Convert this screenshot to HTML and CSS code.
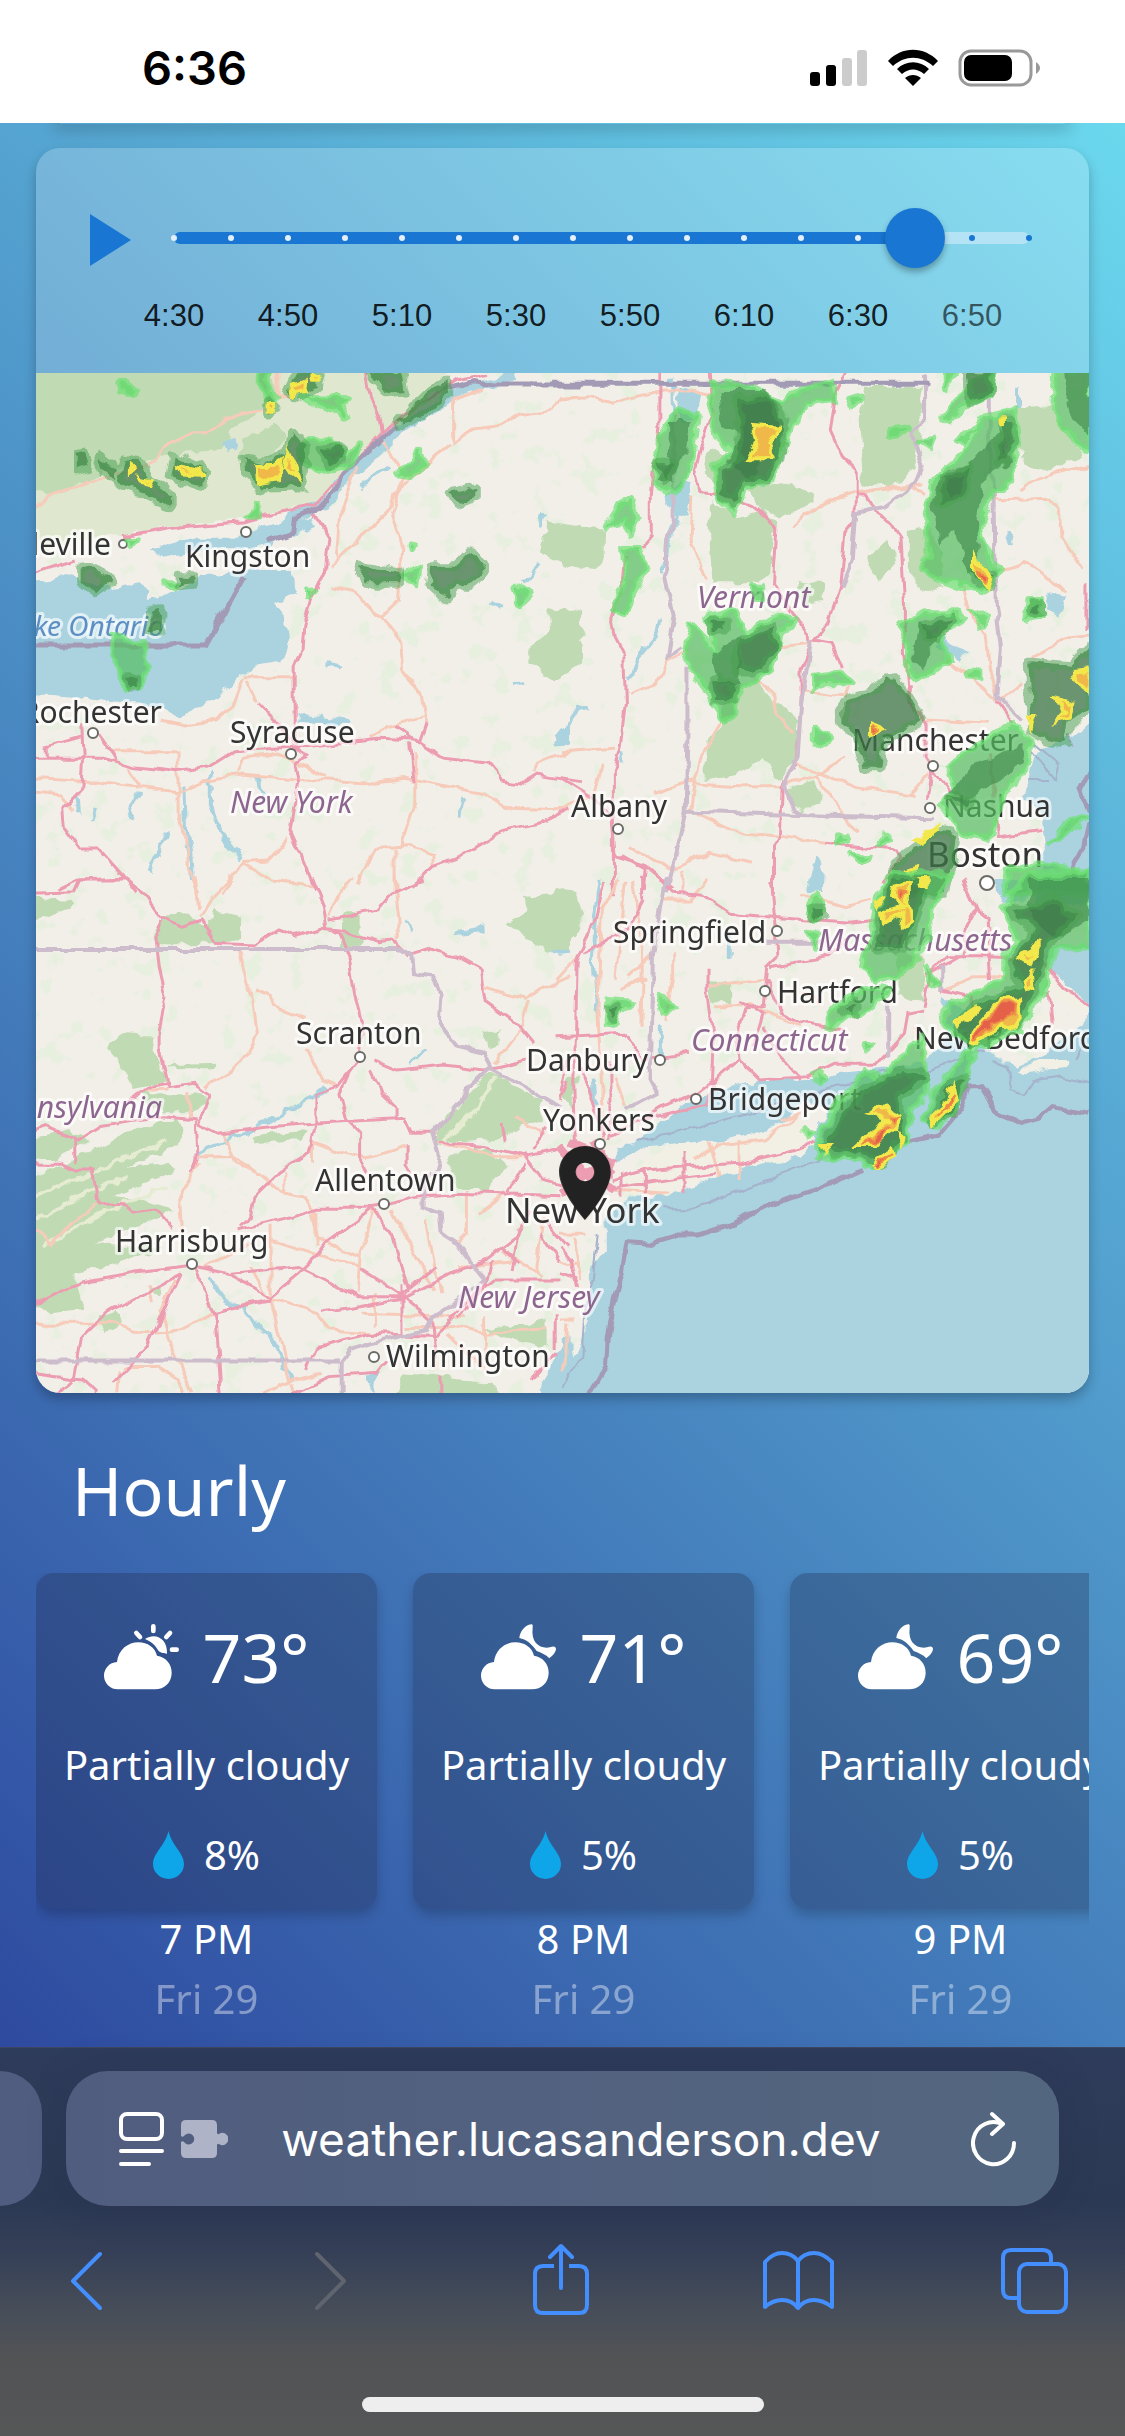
FILE: index.html
```html
<!DOCTYPE html>
<html lang="en">
<head>
<meta charset="utf-8">
<meta name="viewport" content="width=device-width, initial-scale=1">
<title>Weather</title>
<link rel="stylesheet" href="styles.css">
</head>
<body>
<header class="status">
  <time class="clock">6:36</time>
  <div class="status-icons">
    <svg width="58" height="38" viewBox="0 0 58 38" aria-hidden="true"><rect y="23" width="10" height="14" rx="3"/><rect x="16" y="16" width="10" height="21" rx="3"/><g fill="#ccc"><rect x="32" y="9" width="10" height="28" rx="3"/><rect x="47" y="1" width="10" height="36" rx="3"/></g></svg>
    <svg width="52" height="38" viewBox="0 0 52 38" aria-hidden="true"><path d="M1 12C15-3 37-3 51 12L46 17C34 6 18 6 6 17ZM10 20C19 11 33 11 42 20L37 25C30 19 22 19 15 25ZM18 29C23 25 29 25 34 29L26 37Z"/></svg>
    <svg width="84" height="38" viewBox="0 0 84 38" aria-hidden="true"><rect x="2" y="2" width="71" height="34" rx="11" fill="none" stroke="#999" stroke-width="3"/><rect x="6" y="6" width="48" height="26" rx="7"/><path fill="#999" d="M78 13Q86 19 78 25Z"/></svg>
  </div>
</header>

<main class="page">
  <div class="previous-card"></div>
  <section class="radar" aria-label="Radar">
    <div class="player">
      <button class="play" aria-label="Play"><svg width="41" height="52" viewBox="0 0 41 52"><path d="M0 0L41 26L0 52Z"/></svg></button>
      <div class="timeline">
        <div class="slider">
          <div class="track"></div>
          <div class="ticks"><i></i><i></i><i></i><i></i><i></i><i></i><i></i><i></i><i></i><i></i><i></i><i></i><i></i><i></i><i class="future"></i><i class="future"></i></div>
          <input type="range" min="0" max="15" value="13" aria-label="Radar time">
        </div>
        <div class="times"><span>4:30</span><span>4:50</span><span>5:10</span><span>5:30</span><span>5:50</span><span>6:10</span><span>6:30</span><span class="future">6:50</span></div>
      </div>
    </div>
    <svg class="map" viewBox="36 373 1053 1020" role="img" aria-label="Precipitation map around New York">
      <defs>
        <filter id="rough" x="0" y="0" width="100%" height="100%"><feTurbulence type="fractalNoise" baseFrequency=".07" numOctaves="2" seed="4"/><feDisplacementMap in="SourceGraphic" scale="12" xChannelSelector="R" yChannelSelector="G"/></filter>
        <filter id="wiggle" x="0" y="0" width="100%" height="100%"><feTurbulence type="fractalNoise" baseFrequency=".05" numOctaves="2" seed="9"/><feDisplacementMap in="SourceGraphic" scale="9" xChannelSelector="R" yChannelSelector="G"/></filter>
        <filter id="speckle" x="0" y="0" width="100%" height="100%"><feTurbulence type="fractalNoise" baseFrequency=".045" numOctaves="4" seed="12"/><feColorMatrix values="0 0 0 0 .75  0 0 0 0 .86  0 0 0 0 .69  9 0 0 0 -5.4"/></filter>
      </defs>
      <rect x="36" y="373" width="1053" height="1020" fill="#f2efe9"/>
      <rect x="36" y="373" width="1053" height="1020" filter="url(#speckle)" opacity=".6"/>

      <!-- woods and water -->
      <g filter="url(#rough)">
        <g transform="translate(30 370) scale(.3444 .3333)">
          <path class="wood pale" d="M-60-60H1260L1150 90 1040 190 920 300 840 400 620 450 420 470 200 500-60 560Z"/>
          <path class="wood" d="M-60-60H690L720 90 590 170 560 240 420 250 260 290 100 360-60 380ZM620 200L720 160 740 210 700 260 610 290ZM1600 460L1520 480 1490 500 1480 550 1560 590 1620 590ZM1600 710L1540 730 1500 790 1450 830 1450 880 1520 930 1600 880Z"/>
          <path class="water" d="M-40 640L60 630 100 612 150 630 240 655 320 640 350 660 340 690 400 680 500 620 640 600 760 600 770 670 710 700 740 740 750 820 735 880 650 895 590 935 550 985 480 1010 440 1045 380 1010 280 1000 180 985 60 975-40 970ZM350 540L480 500 600 500 700 460 820 440 830 470 740 500 640 530 500 540 380 560ZM780 1030L930 1050 925 1065 780 1055ZM1520 1100L1568 1060V1120L1530 1130ZM560 210L590 200 600 240 575 250Z"/>
          <path class="river wide" d="M1410 20L1250 60 1060 190 900 340 860 400 760 440 740 490 680 520"/>
          <path class="river" d="M445 1250L450 1370 465 1440 470 1530M525 1200L525 1310 560 1400 615 1470M395 1380L375 1440 345 1510M315 1260L285 1350M655 1220L680 1280M140 1270L145 1330M180 1310L185 1360M1480 570L1430 640M1340 690L1370 720M1400 940L1440 930M1255 1290L1250 1340M1040 290L960 350M860 880L900 890M1490 430L1480 470"/>
        </g>
        <g transform="translate(560 370) scale(.3444 .3333)">
          <path class="wood" d="M-40 450L130 480V560L110 600 50 595 0 570ZM-40 710L50 730 75 800 0 880ZM440 390L520 440 590 420 625 460 610 610 560 640 440 640 430 500ZM880 50H1050V180L1030 290 1000 340 880 350 870 150ZM540 350L650 340 730 370 740 400 640 440 580 420ZM480 950L580 930 620 1000 680 1020 690 1150 640 1230 590 1160 500 1220 420 1230 420 1130 470 1060ZM1010 480L1070 470 1110 550 1110 650 1050 670 1010 600ZM890 560L950 510 980 570 920 640ZM1320 120L1430 110 1520 250 1420 310 1340 270ZM650 1260L740 1230 760 1300 700 1330ZM430 230L480 250 450 340 420 310ZM690 630L760 640 770 690 700 700Z"/>
          <path class="water" d="M340 60L410 70 400 130 350 160ZM340 330L385 340 370 440 330 440 310 380ZM1100 800L1190 850 1160 870 1090 830ZM1420 670L1470 680 1450 740 1410 710ZM1600 1010L1490 1100 1400 1130 1370 1180 1350 1290 1400 1330 1410 1420 1390 1470 1380 1600H1600ZM745 1460L765 1480 760 1560 720 1560Z"/>
          <path class="river" d="M325 20L330 180M340 430L310 520 300 610M285 750L275 800 220 870 200 930M90 1015L50 1020 0 1100M1330 50L1330 120M1300 480L1310 530M180 1150L175 1180"/>
        </g>
        <g transform="translate(30 880) scale(.3444 .3333)">
          <path class="wood" d="M220 500L260 460 350 470 380 560 400 610 300 630 270 560ZM1440 50L1568 30V210L1510 220 1440 170 1380 130 1450 90ZM-20 50L120 60 130 80 20 120ZM370 130L430 90 510 130 540 90 610 110 610 180 540 190 360 190ZM910 100H960V200H900ZM1330 580L1490 660 1480 720 1350 780 1190 790 1180 750ZM1210 830L1320 800 1390 860 1330 930 1240 930ZM-20 910L100 850 300 750 430 710 440 750 420 800 280 860 400 850 430 870 240 950 330 960 420 990 190 1090 390 1100 230 1160 120 1180 160 1290 60 1300-20 1250ZM-20 780L110 750 180 780 80 840-20 840ZM320 640L460 640 520 650 470 700 380 700ZM400 550L540 545 540 565 420 565ZM200 1310L250 1290 270 1330 220 1370ZM640 770L800 750 790 780 650 790ZM1310 1350L1500 1320 1500 1400 1420 1380ZM1320 460L1370 450 1360 500 1330 510ZM1090 1480L1300 1500 1400 1550H1060ZM340 1220H390L380 1250Z"/>
          <path class="ridge" d="M-20 960L180 880 400 780M-20 1040L120 960 280 890M40 1100L200 1000 400 920M1200 790L1300 680 1350 600"/>
          <path class="water" d="M1568 1360L1520 1430 1480 1530 1500 1600H1600ZM975 1480L1010 1480 1000 1540 985 1520Z"/>
          <path class="river" d="M520 1190L560 1260 620 1280 660 1340 720 1400 740 1460 760 1500M1150 510L1100 550M1090 130L1110 160M480 820L600 770 700 720 860 630M1520 220L1568 215M1230 160L1320 145"/>
        </g>
        <g transform="translate(560 880) scale(.3444 .3333)">
          <path class="wood" d="M-20 20L50 30 70 100 40 170-20 160ZM20 590L50 590 30 680 10 650ZM430 300L500 310 500 370 440 370ZM980 220L1050 230 1060 370 980 350Z"/>
          <path class="water" d="M160 810L240 770 350 690 440 640 540 610 720 600 800 580 900 570 980 560 1060 540 1120 480 1130 400 1100 350 1200 400 1220 480 1250 520 1330 560 1400 530 1440 490 1520 440 1540 380 1450 300 1410 240 1430 200 1600 190V1600H-20L30 1450 80 1330 90 1180 130 1100 130 1030 180 960 320 940 440 900 560 860 700 830 740 760 780 690 720 660 620 740 480 780 340 790 240 800 170 840ZM1250 0H1360L1350 60 1290 70Z"/>
          <path class="river" d="M115 0L100 130 95 250 110 400M290 430V540M490 160V240M95 590L100 680"/>
          <path class="land" d="M200 880L260 830 350 790 480 790 620 750 720 690 740 690 700 740 740 790 700 820 520 870 320 930 180 950ZM1330 570L1400 540 1480 540 1470 560 1350 580Z"/>
          <path class="land" d="M1380 400L1450 410 1440 450 1370 460ZM1410 240L1440 300 1520 370 1568 380V400L1500 380 1420 350Z"/>
        </g>
      </g>

      <!-- roads and borders -->
      <g filter="url(#wiggle)">
        <g transform="translate(30 370) scale(.3444 .3333)">
          <path class="trunk" d="M0 420L70 370 210 325 340 290 400 230 470 185 520 185 570 145 690 115M720-20V80L760 90M1230 90V220L1290 180 1360 170 1420 135 1510 120 1540 90 1600 85M1230 90L1320 55M1220 225L1140 290 1060 370 1035 430 960 500 870 590M1025 210L1085 320 1050 430 1080 520 1070 690 1020 740 940 665 870 650M950 290L900 420 890 560M1020 740L1080 820 1085 910 1135 970 1150 1060M630 930L660 1000M620 920H690L770 920M620 925L590 1010 540 1050 450 1065 380 1050M0 1225L180 1235 300 1250 430 1265 500 1235 620 1215 770 1230 870 1230 980 1240 1090 1225 1200 1250 1320 1275 1400 1315 1568 1320M240 1145H430V1340L455 1400 460 1500 490 1570M280 1190L320 1250M0 1265L90 1275 120 1320M605 1210L620 1165 720 1150 860 1220M990 1100L1040 1070 1140 1040M1120 1150V1300L1085 1400 1080 1430M950 1540L1000 1440 1100 1430 1170 1450 1170 1490M620 1475L690 1470 750 1400M560 1570L620 1480 700 1530 820 1545M1460 1210L1470 1180 1568 1145M1060 1440V1570"/>
          <path class="motor" d="M-20 620L130 570M270 500L440 470 620 455 690 435 830 405 900 320 1040 170 1240 30 1330 10M970-20L985 80 1015 150 1020 190M825 430L865 500 855 600 820 680 795 770 790 840 770 890V1140L800 1160 770 1180 780 1240 755 1380 790 1460 830 1560M-20 1165H210L300 1190 430 1205 520 1190 590 1145 760 1135 1010 1105 1120 1110 1200 1165 1330 1180 1370 1230 1430 1240 1470 1215 1600 1235M665 1000L720 1060 780 1140M1060 1065L1130 1120 1150 1060M1105 1120L1115 1240M200 1090L250 1170M150 1060L155 1180 150 1260 95 1320 100 1370 150 1440 200 1440 270 1520 310 1570M80 1560L140 1530 270 1525M1568 1315L1480 1360 1370 1385 1250 1460 1170 1490 1110 1550M50 1165V1130L150 1100"/>
          <path class="border bold" d="M0 825H510L620 620M690 515L760 490 765 445 840 415 890 360 910 310 1060 170M1200 60L1290 35 1350 45H1600"/>
        </g>
        <g transform="translate(560 370) scale(.3444 .3333)">
          <path class="trunk" d="M0 85L90 80 150 100 220 80 300 60 380 60 440 80M380 380L375 500 400 560 425 630M670 475L740 410 850 370 1010 345 1060 370M850 370L1050 345M1250 390L1420 385 1450 420 1455 500 1520 600M1280 600L1350 580 1420 620 1470 670M1340 360L1380 330 1470 300 1540 285M640 830L730 820 740 810M200 970L280 940 310 870 370 840M570 930L620 970 630 1030 680 1090M710 960L830 975 840 950M0 1145L160 1135M470 1060L410 1160 390 1240 380 1320 480 1370 540 1390 650 1400 770 1420M360 1240L520 1250 640 1250 740 1215 830 1160M690 1180L860 1250 1030 1280M740 1215L860 1390M1170 650L1190 730 1240 790 1250 900 1270 980M1120 870L1200 930 1270 990M1060 1050L1250 1060M270 1270L390 1230M0 1320L100 1270 120 1180M200 1430L330 1500 430 1450 560 1480M1280 990L1340 940M1370 860L1470 800 1540 795M1010 1280L1070 1210M360 1500V1570"/>
          <path class="motor" d="M290 0V180L275 290 265 380V500L240 530M190 560L185 620 150 750 160 800 185 850 190 1000 175 1130 155 1200V1570M430 0L440 140 410 230 390 310 400 365 460 370 560 410 630 470 620 640 700 760 730 820 700 900V1010L685 1180 645 1250 640 1400 620 1430V1570M835 0L800 70 785 180 820 260 860 300V450L830 490 815 650 780 760 740 810 790 820 820 900M860 375H890L920 430 965 460 990 500 1000 700V850L1020 1000M1020 940V1000L1060 1060V1160L1080 1190 1130 1270M1080 1190L1070 1290M770 1420L980 1440 990 1460 940 1540M1265 990L1310 1060M0 1225L70 1270 150 1330 160 1460 250 1490 330 1560M1250 1150L1270 1400 1400 1385M1530 640V780M180 1460L250 1500 245 1560"/>
          <path class="border" d="M1060 10V80L1060 150 1020 190 1050 290 1030 340 940 410 860 430 850 570 820 650M730 810L700 1000 690 1160 650 1250 680 1320 710 1335M370 890V1100L365 1325 330 1480 310 1570M365 1325L690 1335 1080 1345M1245 80V200L1262 400 1265 700 1280 830 1270 980 1340 1050M330 130V460L310 520 305 620 330 740 310 860 350 830"/>
          <path class="border bold" d="M-20 40H1070M1540 1200L1510 1260 1540 1340 1520 1430 1490 1480V1520"/>
          <path class="border sea" d="M1370 1140L1440 1230 1450 1180 1380 1120M1470 1090L1490 1130M1360 1230L1420 1230"/>
        </g>
        <g transform="translate(30 880) scale(.3444 .3333)">
          <path class="trunk" d="M480-10L490 90M590-10L530 50 495 110M940-10L900 40 870 110M1060-10L1075 130 1060 180M605 210L625 300 645 350 660 460 630 520 590 570 510 620M650 330L700 350 710 380 800 415M810 510L850 600 890 620M330 635L400 630M455 640L465 720M565 755L600 850 680 890 740 940 790 950 830 1000 830 1070 960 1130M490 830H590L660 880M490 850L435 960 440 1060M740 880V940M820 780V850M820 785L920 820 980 830 1090 795M1000 990L960 1110 950 1240M1050 990L1110 1100 1170 1230M1150 1020L1190 1240M700 1040V1260L750 1480 770 1540M700 1080L880 1140 960 1155M640 1160L690 1250 830 1300 870 1350 1010 1360M420 1200L380 1290 400 1370 470 1540M0 1330H240L320 1360 440 1350 530 1300M340 1210L350 1270M0 1030L60 1090 190 970M1320 320L1440 355 1480 330 1568 290M1450 360L1430 440 1350 550M1410 710L1500 760M1180 790L1370 830 1440 830M1270 930V1060L1240 1090M1300 1000L1380 940M270 1460L370 1460 430 1500 450 1540M260 1470L255 1540M1090 1340H1230L1320 1360 1500 1350M1000 1240V1340M1320 1310V1470L1210 1360M1170 1320L1180 1470M960 1300L1260 1310M1470 1180L1490 1010M1370 1110L1490 1190M490 1170L640 1090M820 1000L840 1100M670 1540L730 1510 850 1480M1240 1160L1400 1140"/>
          <path class="motor" d="M0 40L130 35 145 0H280L330 40 380 110 430 140 500 120 535 190 650 195 720 150 770 170 850 145 900 150 1010 185 1050 180 1100 230 1160 210 1250 235 1310 270 1325 370 1420 440 1460 490M820-10L855 80 865 145 900 160 930 240 945 340 965 430 960 520M870 120L1010 90 1050 40 1140 0M380 120L365 160 375 260 395 350 375 450 375 510 400 620 480 610 520 640 490 730 550 760 700 740 820 730 1090 715 1110 760 1180 760M395 610L320 640 290 660M0 755L50 740 140 780 200 740 390 710 480 720 485 840 470 880M0 850L90 850 130 870 180 870 200 975 260 970 290 1000 370 990 415 1040M130 780V850M960 530L890 620 830 640V730L810 820 720 880 650 950 640 1010 610 1040M1000 540L1070 570 1200 555 1320 570 1440 540M990 570L1020 640 1060 680V715M930 570L900 640 920 720 960 760 960 840 980 880M1095 790V850L1110 880M1190 790L1320 800 1450 830 1540 810M600 1050L760 1010 830 985 990 985 1130 950 1240 940 1540 950M1000 990L1050 1060 1080 1170 1100 1230M0 1275L150 1210 300 1180 470 1160 580 1185 700 1250 780 1180 830 1130 860 1090 1000 985M440 1180L220 1300 150 1370 130 1490 60 1560M440 1180L340 1400 240 1510M480 1170L540 1310 555 1540M540 1300L700 1255M580 1180L780 1160 860 1200 950 1250 1070 1250 1180 1160M960 1165L1070 1240 1170 1330 1180 1440M700 1260L640 1270 560 1290M850 1300L1070 1260 1240 1170 1320 1140 1410 1070 1450 990M800 1470L830 1400 990 1360 1180 1370 1240 1290 1350 1200 1540 1200M760 1540L870 1490 1010 1480 1040 1440M1080 1210V1360M1340 1140L1320 1230 1240 1310M1370 1100L1420 1150M1420 1040L1400 1170M1440 830L1490 900 1560 920M1370 730L1380 790M1460 810L1500 740M1390 940L1440 850M1560 600L1540 660M0 1480L150 1500 190 1540M1190 1490V1560M1460 1500L1530 1420M1525 1300V1410M1500 1030L1560 1100M1480 1060L1540 1150"/>
          <path class="border" d="M0 207H1070L1110 230 1115 280 1170 290 1195 340 1190 430 1240 500 1320 520 1340 560 1270 620 1250 670 1170 760 1190 830 1180 870 1140 900V980L1190 1000 1195 1060 1240 1090 1280 1150 1320 1200 1290 1230 1170 1310 1150 1350 1010 1385 930 1410 905 1450V1540M0 1442H900M1340 565L1540 680"/>
        </g>
        <g transform="translate(560 880) scale(.3444 .3333)">
          <path class="trunk" d="M170 0L120 90 110 400M190 0L160 300M210 0L240 200 235 440M-10 300L60 220M110 400L120 600 130 780M160 590L190 680M170 330L250 290M430 0L380 60 300 60M270 220L200 290M330 220V300L310 420M430 320L600 300M450 380L560 380 700 440M640 720L700 700 590 780 450 800M390 840L460 790M430 780L460 890M520 780V900M150 930L320 940M0 1060H80M40 1070L60 1200M700 40L830 80 900 60M700 340L760 370M1120 330L1200 290 1290 290M1030 440L1060 560M0 1320H40M20 1330L10 1480M0 1150L60 1150"/>
          <path class="motor" d="M130 0L100 130 50 240 45 470 40 600 45 800M240-10V60L200 140 70 220M290 0L330 40 410 45 490 100 600 110 720 120 840 130 920 120M615 0L630 230 600 260 590 380 550 390 510 440 520 540 440 610 430 680 350 690 240 720M-10 470L190 460 240 540 380 520M600 300L640 400 700 430 830 450M520 540L580 600 720 590 800 550 920 550 1000 460 1010 400 1060 390M700 600L640 530 590 440M430 260V340L445 480 440 600 390 640 300 680 150 770M610 260L780 230 830 180M150 900L250 870 360 860 520 850 640 820 740 790M160 925L370 890 450 880M180 880V950M245 870V940M360 810V940M1060 380L1080 270 1120 230H1250L1400 240 1450 310 1540 380M1170 0L1210 90 1180 150 1170 230M1210 90L1240 110 1250 300M1110 330L1190 350 1200 400M0 1100L30 1140 45 1220M0 1180L50 1200M60 560L100 690 130 770M145 540V780M20 540L0 640M1420 330L1430 440M520 370L590 400 560 500M1060 290L1160 230"/>
          <path class="motor city" d="M0 800L40 850 100 900 160 930M0 880L150 880M30 790L160 850M0 940L140 840M90 780L150 880"/>
          <path class="border" d="M310-10L270 220 260 600 280 640 190 690M600 185H760M950 370V530M1110 330V260"/>
          <path class="border sea" d="M220 780L330 760 550 700 720 640 870 600 930 570 1080 570 1180 530 1250 510M300 985H390L600 900 780 830M110 1060L95 1200 75 1280 65 1430 10 1520M1250 540L1300 560 1310 630 1350 645 1380 600 1450 590 1540 610M1500 540L1510 500"/>
          <path class="border bold" d="M90 1540L135 1460 140 1370 160 1260 180 1180 195 1085 260 1090 340 1065 400 1065 500 1030 600 980 740 930 880 865M1010 785L1100 765 1160 690 1190 620 1220 620 1270 700 1340 730 1390 715 1430 680 1540 700"/>
        </g>
      </g>

      <!-- places -->
      <g class="dots">
        <circle cx="123" cy="544" r="4"/><circle cx="246" cy="532" r="5"/><circle cx="93" cy="733" r="5"/><circle cx="291" cy="754" r="5"/><circle cx="618" cy="829" r="5"/><circle cx="933" cy="766" r="5"/><circle cx="930" cy="808" r="5"/><circle cx="987" cy="883" r="7"/><circle cx="777" cy="931" r="5"/><circle cx="765" cy="991" r="5"/><circle cx="660" cy="1060" r="5"/><circle cx="696" cy="1099" r="5"/><circle cx="600" cy="1144" r="5"/><circle cx="360" cy="1057" r="5"/><circle cx="384" cy="1204" r="5"/><circle cx="192" cy="1264" r="5"/><circle cx="374" cy="1357" r="5"/>
      </g>
      <g class="city-name">
        <text x="111" y="555" text-anchor="end">leville</text><text x="185" y="567">Kingston</text><text x="162" y="723" text-anchor="end">Rochester</text><text x="230" y="743">Syracuse</text><text x="571" y="817">Albany</text><text x="852" y="751">Manchester</text><text x="943" y="817">Nashua</text><text x="613" y="943">Springfield</text><text x="777" y="1003">Hartford</text><text x="914" y="1049">New Bedford</text><text x="708" y="1110">Bridgeport</text><text x="526" y="1071">Danbury</text><text x="543" y="1131">Yonkers</text><text x="296" y="1044">Scranton</text><text x="315" y="1191">Allentown</text><text x="115" y="1252">Harrisburg</text><text x="386" y="1367">Wilmington</text>
        <text class="metro" x="927" y="867">Boston</text><text class="metro" x="505" y="1223">New York</text>
      </g>
      <g class="state-name">
        <text x="230" y="813">New York</text><text x="697" y="608">Vermont</text><text x="818" y="951">Massachusetts</text><text x="691" y="1051">Connecticut</text><text x="162" y="1118" text-anchor="end">nsylvania</text><text x="458" y="1308">New Jersey</text><text class="lake" x="164" y="636" text-anchor="end">ke Ontario</text>
      </g>

      <!-- precipitation -->
      <g filter="url(#rough)">
        <g transform="translate(30 370) scale(.3444 .3333)">
          <path class="rain light" d="M670 0H700L690 60 720 90 700 120 670 60ZM790 80L920 85 900 105 920 140 870 120ZM1130 235L1145 285 1110 315 1060 310 1110 285ZM655 405L665 440 635 440ZM240 800L330 820 340 900 320 960 270 960 265 900 235 860ZM1405 650L1460 670 1425 705ZM1070 625L1130 590 1125 640ZM800 200L870 210 920 250 960 220 940 280 850 310 780 270ZM260 35L310 55 300 70 260 55ZM280 510H310L300 530ZM390 640L430 640 420 660ZM1105 520L1120 530 1110 540ZM810 655L820 665 810 680Z"/>
          <path class="rain" d="M770 10H840L830 50 770 80 745 65ZM690 90L720 120 690 135ZM130 250L160 240 170 290 130 300ZM200 260L250 300 250 330 210 300ZM270 270L320 280 350 330 410 370 410 410 370 390 290 350 255 330ZM420 260L510 300 500 350 410 320ZM620 265L680 280 740 250 765 190 800 230 790 350 670 355 625 310ZM990 10H1080L1090 60 1030 65ZM1070 155L1120 100 1210 30 1210 75 1150 130 1080 170ZM1220 370L1290 350 1290 385 1240 400ZM950 585L1070 605 1070 640 980 640ZM1165 590L1230 590 1280 540 1320 600 1290 640 1240 640 1210 690 1160 640ZM150 590L190 590 235 640 190 670 150 640ZM350 720L380 710 380 780 350 780ZM430 620L475 620V640L430 645ZM845 240L900 230 910 260 870 290ZM285 920L310 920V960H290Z"/>
          <path class="heavy" d="M755 50L800 35 795 65 760 75ZM820 15H835V35H820ZM690 105H712V125H690ZM290 290L302 300 290 310ZM320 325L355 330 345 350ZM430 290L500 305 500 312 440 308ZM660 285L710 285 730 270 720 330 665 340ZM750 240L780 320 740 290Z"/>
        </g>
        <g transform="translate(560 370) scale(.3444 .3333)">
          <path class="rain light" d="M290 190L340 120 400 130 380 300 330 370 270 340ZM185 390L210 390 225 440 200 490 190 450 130 470ZM180 540L230 540 250 600 190 730 155 720 190 620ZM440 40L560 50 640 100 700 60 790 30 800 90 720 100 660 200 620 330 540 350 510 430 460 380 450 290 500 240 440 190ZM1230 140L1320 120 1330 230 1300 350 1250 370 1220 480 1250 580 1280 600 1240 660 1130 640 1050 600 1070 560 1060 440 1080 340 1170 250ZM1440 0H1540V250L1460 170 1430 100ZM430 740L500 720 540 790 620 740 680 740 640 800 620 900 520 960 510 1040 480 1050 430 970 380 900 360 850 380 760 430 810 450 850ZM990 770L1060 730 1160 730 1170 750 1100 790 1130 870 1040 930 1010 900 1010 820ZM740 920L820 910 850 940 770 940 740 960ZM740 1070L790 1110 740 1130ZM960 180L1010 170 960 200ZM1110 150L1170 60 1260 0 1250 80 1180 100 1130 160ZM1150 210L1220 170 1170 220ZM1120 0H1150L1120 60ZM1040 210L1090 200 1080 240ZM560 650H590V690H565ZM1360 690L1400 690 1400 740 1350 750ZM1200 720L1245 740 1230 770ZM1120 1190L1310 1060 1370 1110 1350 1200 1290 1270 1250 1410 1170 1390 1100 1300 1150 1270ZM1540 1340L1420 1420 1470 1360ZM1390 1480L1560 1510V1570H1290L1300 1500ZM840 90L870 80 850 105ZM840 1450L900 1460 870 1475ZM810 1390L830 1410 810 1420ZM1190 905H1215V920H1190ZM940 1390L960 1410 930 1420Z"/>
          <path class="rain soft" d="M320 150L380 150 370 230 330 330 280 330 310 280ZM460 60L600 60 640 130 620 200 560 330 480 280 530 200 470 170ZM1200 270L1280 180 1310 270 1230 330 1210 450 1220 600 1180 610 1150 480 1100 520 1080 420 1100 330ZM1130 1270L1200 1180 1350 1120 1340 1180 1250 1250 1180 1290ZM1460 0H1540V200L1480 140ZM440 850L520 800 520 940 460 940ZM1040 760L1090 800 1060 900 1020 880Z"/>
          <path class="rain" d="M520 90L600 80 650 150 640 260 600 330 530 330 510 400 470 370 470 300 520 260ZM1290 150L1310 150 1320 240 1270 280ZM1180 10H1250V70L1190 90ZM1110 330L1190 290 1170 380 1110 400ZM520 810L620 770 630 830 590 900 510 900ZM440 930L500 930 510 990 450 990ZM440 750H480V780H440ZM1050 770L1140 745 1100 800 1060 800ZM820 1000L900 960 960 920 1000 960 1050 1040 1010 1080 940 1110 930 1190 880 1190 860 1100 820 1060ZM1360 880L1480 890 1540 830V1010L1480 1060 1470 1120 1410 1110 1370 1080ZM1190 600L1260 610 1250 650 1210 630ZM1130 1280L1190 1290 1180 1310ZM970 1480L1100 1380 1150 1400 1120 1570H970ZM280 280H330L310 330ZM1370 700H1395V730H1370Z"/>
          <path class="heavy" d="M560 165L635 170 610 220 620 265 545 265 570 220ZM1285 145H1292V160H1285ZM1205 560L1255 625 1245 655 1205 600ZM1495 905L1540 900V970L1500 940ZM1440 985L1490 1000 1480 1050 1440 1060 1465 1030ZM900 1065L935 1080 900 1095ZM1355 1045L1380 1040 1370 1075ZM1035 1410L1100 1365 1100 1378 1045 1418ZM1005 1500L1035 1490 1020 1520ZM985 1550L1010 1540V1568H985Z"/>
          <path class="severe" d="M1215 610L1245 625 1235 640ZM905 1070L925 1080 910 1090Z"/>
        </g>
        <g transform="translate(560 880) scale(.3444 .3333)">
          <path class="rain light" d="M970-20H1140L1080 90 1060 200 990 280 920 300 880 260 910 130 920 50ZM890 330L950 320 940 350 870 400 820 420 780 450 780 390ZM1350-20H1540V200L1440 210 1400 340 1330 450 1200 510 1190 560 1150 690 1100 740 1050 720 1110 600 1200 500 1120 440 1110 390 1180 350 1290 300 1290 230 1330 190 1290 90ZM750 770L800 680 890 570 930 600 1050 470 1060 580 1070 640 1020 690 1010 780 920 870 850 830 750 830ZM140 360L210 365 170 400 160 435 135 430ZM290 350L330 380 300 400ZM740 40L770 90 740 120 720 100ZM720 150L750 170 740 200ZM740 580L770 590 750 615ZM710 750L730 765 710 775ZM880 490L910 500 890 515ZM1060 260L1100 310 1080 320Z"/>
          <path class="rain soft" d="M1360 0H1540V120L1450 170 1370 130Z"/>
          <path class="rain" d="M970 0H1060L1040 90 1000 210 920 210 930 90ZM1310 90L1440 60 1500 110 1420 190 1380 330 1330 430 1190 500 1150 440 1200 380 1340 320 1310 250 1380 150ZM830 680L900 620 1000 570 1060 590 980 650 1000 770 940 850 870 820 760 810ZM1130 610L1180 590 1140 700 1080 730ZM820 390L860 370 850 405ZM730 90H765V110H735ZM140 380L170 380 155 415Z"/>
          <path class="heavy" d="M975 20L1010 10 1010 60 1020 120 995 140 990 100 940 130 935 95 1000 80 970 50ZM920 60L940 45 925 75ZM1040 0H1065V12H1045ZM1390 180V200L1365 250 1340 235 1370 220ZM1370 275L1375 320 1350 330 1345 310ZM1145 430L1215 380 1205 395 1155 440ZM1190 490L1210 440 1280 360 1330 355 1335 410 1310 450 1280 430 1210 495ZM900 700L930 680 985 710 975 740 910 795 865 795 930 740 950 715ZM1140 615L1155 660 1085 730 1080 710 1120 670ZM905 850L965 805 970 830 920 865ZM985 760L1000 770 995 790ZM760 795L785 795 770 820Z"/>
          <path class="severe" d="M980 35L1005 40 985 55ZM1200 480L1220 440 1290 370 1325 370 1320 400 1250 430 1210 485ZM890 790L950 740 930 785ZM1120 680L1145 640 1140 665 1095 705ZM910 850L965 820 920 860ZM955 710L980 715 960 725Z"/>
        </g>
      </g>
      <path class="pin" transform="translate(540.6 1138.6) scale(3.7)" d="M12 2C8.13 2 5 5.13 5 9c0 5.25 7 13 7 13s7-7.75 7-13c0-3.87-3.13-7-7-7zm0 9.500c-1.380 0-2.500-1.120-2.500-2.500s1.120-2.500 2.500-2.500 2.500 1.120 2.500 2.500-1.120 2.500-2.500 2.500z"/>
    </svg>
  </section>

  <h2 class="title">Hourly</h2>
  <svg class="symbols" aria-hidden="true">
    <symbol id="cloud" viewBox="45 74 225 198"><path d="M88 270A41 41 0 0 1 84 188C88 150 118 129 148 129C176 129 198 145 204 169C230 173 248 193 248 220C248 250 226 270 198 270Z"/></symbol>
    <symbol id="moon" viewBox="45 74 225 198"><path d="M160 116C162 98 176 76 196 75C202 75 200 82 200 86C194 130 222 150 252 144C262 140 270 140 270 150C268 162 258 170 250 177C240 166 225 160 212 155C198 134 180 120 160 116Z"/></symbol>
    <symbol id="sun" viewBox="45 74 225 198"><path d="M168 119C200 98 236 118 234 163C222 163 212 158 209 155C200 140 190 128 168 119Z"/><path fill="none" stroke="#fff" stroke-width="14" stroke-linecap="round" d="M193 81V95M142 101L153 113M243 101L232 113M249 151H263"/></symbol>
    <symbol id="drop" viewBox="0 0 31 48"><path d="M15.500 0C19 15 31 22 31 33A15.500 15 0 0 1 0 33C0 22 12 15 15.500 0Z"/></symbol>
  </svg>
  <ul class="hours">
    <li><article class="hour"><div class="temp"><svg class="sky"><use href="#sun"/><use href="#cloud"/></svg>73°</div><p>Partially cloudy</p><div class="chance"><svg class="drop"><use href="#drop"/></svg>8%</div></article><time>7 PM</time><span class="day">Fri 29</span></li>
    <li><article class="hour"><div class="temp"><svg class="sky"><use href="#moon"/><use href="#cloud"/></svg>71°</div><p>Partially cloudy</p><div class="chance"><svg class="drop"><use href="#drop"/></svg>5%</div></article><time>8 PM</time><span class="day">Fri 29</span></li>
    <li><article class="hour"><div class="temp"><svg class="sky"><use href="#moon"/><use href="#cloud"/></svg>69°</div><p>Partially cloudy</p><div class="chance"><svg class="drop"><use href="#drop"/></svg>5%</div></article><time>9 PM</time><span class="day">Fri 29</span></li>
  </ul>
</main>

<footer class="browser">
  <div class="tabs">
    <div class="tab-edge"></div>
    <div class="address">
      <button aria-label="Page settings"><svg width="46" height="54" viewBox="0 0 46 54"><g fill="none" stroke="#fff" stroke-width="4" stroke-linecap="round"><rect x="2" y="2" width="41" height="25" rx="6"/><path d="M2 39H43M2 52H30"/></g></svg></button>
      <button aria-label="Extensions"><svg width="47" height="38" viewBox="0 0 47 38"><path fill="#aeb3c8" d="M5 0H31Q36 0 36 5V13Q37 15 38 14A6 6 0 1 1 38 24Q37 23 36 25V33Q36 38 31 38H5Q0 38 0 33V22Q2 20 4 23A5.500 5.500 0 1 0 4 15Q2 18 0 16V5Q0 0 5 0Z"/></svg></button>
      <input type="text" value="weather.lucasanderson.dev" aria-label="Address">
      <button aria-label="Reload"><svg width="46" height="56" viewBox="0 0 46 56"><path fill="none" stroke="#fff" stroke-width="4" stroke-linecap="round" stroke-linejoin="round" d="M43 32A20.500 21 0 1 1 31 13M21 3L32 13L21 23"/></svg></button>
    </div>
  </div>
  <nav class="toolbar" aria-label="Browser">
    <button aria-label="Back"><svg viewBox="0 0 80 80"><path d="M53 14L26 41L53 68"/></svg></button>
    <button aria-label="Forward" disabled><svg viewBox="0 0 80 80"><path d="M33 14L60 41L33 68"/></svg></button>
    <button aria-label="Share"><svg viewBox="0 0 80 80"><path stroke-linecap="butt" d="M33 26H22Q14 26 14 34V65Q14 73 22 73H58Q66 73 66 65V34Q66 26 58 26H48"/><path d="M40 48V7M29 17L40 6L51 17"/></svg></button>
    <button aria-label="Bookmarks"><svg viewBox="0 0 80 80"><path d="M7 67V22Q15 13 24 13Q34 13 40 21Q46 13 56 13Q65 13 74 22V67Q65 60 56 60Q46 60 40 68Q34 60 24 60Q15 60 7 67ZM40 21V68"/></svg></button>
    <button aria-label="Tabs"><svg viewBox="0 0 80 80"><path d="M56 22V18Q56 10 48 10H16Q8 10 8 18V50Q8 58 16 58H22"/><rect x="24" y="24" width="47" height="48" rx="8"/></svg></button>
  </nav>
  <div class="home-bar"></div>
</footer>
</body>
</html>
```
FILE: styles.css
```css
* { box-sizing: border-box; }

body {
  margin: 0;
  min-height: 100vh;
  display: flex;
  flex-direction: column;
  font-family: "Noto Sans", "Open Sans", sans-serif;
  color: #fff;
}

button {
  margin: 0;
  padding: 0;
  border: 0;
  background: none;
  display: block;
  cursor: pointer;
}

svg { display: block; }

/* status bar */
.status {
  display: flex;
  justify-content: space-between;
  align-items: center;
  padding: 36px 83px 24px 142px;
  background: #fff;
  color: #000;
}
.clock { font: 600 47px/63px Inter, sans-serif; }
.status-icons { display: flex; gap: 19px; }

/* page */
.page {
  flex: 1;
  overflow: hidden;
  padding: 0 36px;
  background: linear-gradient(45deg, #2e4a9f, #6bd8ee);
}
.previous-card {
  height: 1px;
  margin: 0 24px 24px;
  box-shadow: 0 0 16px 6px rgba(0, 0, 0, .2);
}

/* radar card */
.radar {
  border-radius: 24px;
  overflow: hidden;
  background: rgba(255, 255, 255, .2);
  box-shadow: 0 6px 12px rgba(0, 0, 0, .25);
}
.player {
  display: flex;
  align-items: flex-start;
  gap: 13px;
  padding: 60px 30px 38px 54px;
}
.play {
  margin-top: 6px;
  fill: #1976d2;
}
.timeline { flex: 1; }
.slider {
  display: grid;
  align-items: center;
}
.slider > * { grid-area: 1 / 1; }
.track {
  height: 12px;
  margin: 0 30px;
  border-radius: 6px;
  background: linear-gradient(to right, #1976d2 87%, #b3e3f4 87%);
}
.ticks {
  display: flex;
  justify-content: space-between;
  margin: 0 27px;
}
.ticks i {
  width: 6px;
  height: 6px;
  border-radius: 50%;
  background: #e3effa;
}
.ticks .future { background: #1976d2; }
.slider input {
  appearance: none;
  width: 100%;
  height: 60px;
  margin: 0;
  background: none;
}
.slider input::-webkit-slider-thumb {
  appearance: none;
  width: 60px;
  height: 60px;
  border-radius: 50%;
  background: #1976d2;
  box-shadow: 0 4px 6px rgba(0, 0, 0, .3);
}
/* each label is centred under every second tick */
.times {
  display: grid;
  grid-template-columns: repeat(8, 1fr);
  width: calc((100% - 60px) * 16 / 15);
  margin: 29px 0 0 calc(30px - (100% - 60px) / 15);
  font: 31px/38px "Liberation Sans", Arial, sans-serif;
  text-align: center;
  color: rgba(0, 0, 0, .87);
}
.times .future { color: rgba(0, 0, 0, .6); }

.map {
  width: 100%;
  font-size: 30px;
}
.map path { vector-effect: non-scaling-stroke; }
.wood { fill: #c0dbb3; }
.pale { fill: #dfe8cf; }
.water { fill: #aad3df; }
.land { fill: #f2efe4; }
.ridge, .river, .motor, .trunk, .border { fill: none; }
.ridge { stroke: #e6ecd2; stroke-width: 4; }
.river { stroke: #aad3df; stroke-width: 4; }
.river.wide { stroke-width: 10; }
.motor { stroke: #ec9db1; stroke-width: 3; }
.motor.city { stroke-width: 9; }
.trunk { stroke: #f7cbba; stroke-width: 3; }
.border { stroke: #cdbccb; stroke-width: 4; }
.border.bold { stroke: #a39ab6; stroke-width: 5; }
.border.sea { stroke: #a5b2cb; stroke-width: 2; }
.dots { fill: #fff; stroke: #6b6b66; stroke-width: 2; }
.map text {
  paint-order: stroke;
  stroke: rgba(255, 255, 255, .65);
  stroke-width: 6px;
  stroke-linejoin: round;
}
.city-name { fill: #333; }
.metro { font-size: 35px; }
.state-name {
  fill: #8d6690;
  font-style: italic;
}
.lake {
  fill: #5e8fc4;
  font-size: 28px;
}
.rain {
  fill: rgba(61, 119, 71, .75);
  stroke: rgba(71, 160, 80, .5);
  stroke-width: 9;
  stroke-linejoin: round;
}
.rain.light {
  fill: rgba(85, 190, 95, .7);
  stroke: rgba(110, 225, 115, .7);
  stroke-width: 6;
}
.rain.soft { fill: rgba(61, 135, 75, .6); stroke: none; }
.heavy { fill: #efb84a; stroke: #f2e84c; stroke-width: 4; }
.severe { fill: #e4604a; stroke: #ee8a48; stroke-width: 2; }
.pin { fill: #222; }

/* hourly forecast */
.title {
  margin: 47px 36px 33px;
  font-size: 68px;
  line-height: 100px;
  font-weight: 400;
}
.symbols {
  width: 0;
  height: 0;
  position: absolute;
}
.hours {
  display: flex;
  gap: 36px;
  margin: 0;
  padding: 0 0 6px;
  list-style: none;
  overflow: hidden;
  font-size: 40px;
}
.hours li {
  flex: none;
  display: flex;
  flex-direction: column;
  align-items: center;
  line-height: 60px;
}
.hour {
  width: 341px;
  height: 336px;
  padding: 36px 0;
  border-radius: 18px;
  background: rgba(32, 40, 70, .3);
  box-shadow: 0 6px 12px rgba(0, 0, 0, .2);
  display: flex;
  flex-direction: column;
  align-items: center;
}
.temp {
  display: flex;
  align-items: center;
  gap: 24px;
  font-size: 68px;
  line-height: 96px;
}
.sky {
  width: 75px;
  height: 66px;
  fill: #fff;
}
.hour p {
  margin: 30px 0;
  white-space: nowrap;
}
.chance {
  display: flex;
  align-items: center;
  gap: 20px;
}
.drop {
  width: 31px;
  height: 48px;
  fill: #0ea5e9;
}
.day { opacity: .4; }

/* browser controls */
.browser {
  padding: 23px 0 24px;
  border-top: 1px solid #3d4860;
  background: linear-gradient(#2e3c5b, #2c3954 40%, #343f57 52%, #474e59 68%, #525355 80%, #555656);
}
.tabs {
  display: flex;
  gap: 24px;
  padding-right: 66px;
}
.tab-edge {
  flex: none;
  width: 42px;
  border-radius: 0 42px 42px 0;
  background: #505d80;
}
.address {
  flex: 1;
  min-width: 0;
  display: flex;
  align-items: center;
  height: 135px;
  padding: 0 42px 0 53px;
  border-radius: 42px;
  background: linear-gradient(to right, #515d7f, #53667f);
  box-shadow: 0 0 42px rgba(20, 30, 60, .15);
}
.address button + button { margin-left: 16px; }
.address input {
  flex: 1;
  min-width: 0;
  margin: 0 40px 0 3px;
  padding: 0;
  border: 0;
  background: none;
  color: #fff;
  font: 46px/60px Inter, sans-serif;
  text-align: center;
}
.toolbar {
  display: flex;
  justify-content: space-between;
  padding: 34px 50px 77px 47px;
}
.toolbar svg {
  width: 80px;
  height: 80px;
  fill: none;
  stroke: #448fff;
  stroke-width: 4;
  stroke-linecap: round;
  stroke-linejoin: round;
}
.toolbar :disabled svg { stroke: #5f646e; }
.home-bar {
  width: 402px;
  height: 15px;
  margin: 0 auto;
  border-radius: 8px;
  background: #eee;
}
```
